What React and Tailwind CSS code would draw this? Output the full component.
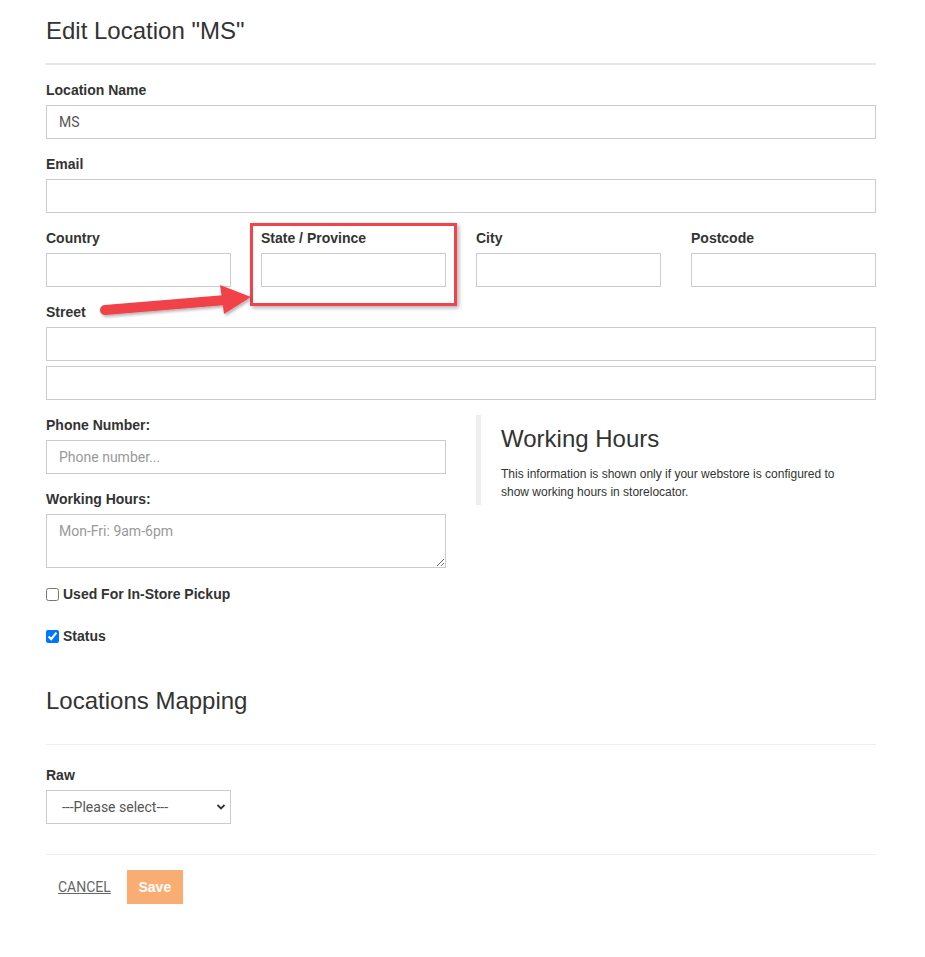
import React from "react";

const labelCls = "block h-[18px] leading-[16px] text-[14px] font-bold text-[#333] mb-[5px]";
const inputCls =
  "block w-full h-[34px] border border-[#cccccc] bg-white px-[12px] text-[14px] text-[#555] placeholder:text-[#999] outline-none [font-family:Roboto,Liberation_Sans,sans-serif]";

function Field({ label, value = "", placeholder = "", className = "" }) {
  return (
    <div className={"mb-[17px] " + className}>
      <label className={labelCls}>{label}</label>
      <input className={inputCls} defaultValue={value} placeholder={placeholder} />
    </div>
  );
}

export default function App() {
  return (
    <div className="relative w-full min-h-[957px] bg-white [font-family:Liberation_Sans,Arial,sans-serif] text-[#333]">
      <div className="ml-[46px] w-[830px] pt-[17px]">
        <h1 className="text-[24px] leading-[27px] font-normal text-[#333]">Edit Location "MS"</h1>
        <div className="mt-[19px] h-[2px] bg-[#e5e5e5]" />
        <div className="mt-[17px]">
          <Field label="Location Name" value="MS" />
          <Field label="Email" />
          <div className="grid grid-cols-4 gap-x-[30px]">
            <Field label="Country" />
            <Field label="State / Province" />
            <Field label="City" />
            <Field label="Postcode" />
          </div>
          <div className="mb-[17px]">
            <label className={labelCls}>Street</label>
            <input className={inputCls} />
            <input className={inputCls + " mt-[5px]"} />
          </div>
          <div className="grid grid-cols-2 gap-x-[30px]">
            <div>
              <Field label="Phone Number:" placeholder="Phone number..." />
              <div>
                <label className={labelCls}>Working Hours:</label>
                <textarea
                  className="block w-full h-[54px] border border-[#cccccc] bg-white px-[12px] pt-[6px] text-[14px] leading-[20px] text-[#555] placeholder:text-[#999] outline-none [font-family:Roboto,Liberation_Sans,sans-serif]"
                  placeholder="Mon-Fri: 9am-6pm"
                />
              </div>
              <label className="mt-[17px] flex h-[18px] items-center gap-[4px] text-[14px] font-bold text-[#333]">
                <input type="checkbox" className="m-0 h-[13px] w-[13px]" />
                Used For In-Store Pickup
              </label>
              <label className="mt-[24px] flex h-[18px] items-center gap-[4px] text-[14px] font-bold text-[#333]">
                <input type="checkbox" defaultChecked className="m-0 h-[13px] w-[13px] accent-[#0075ff]" />
                Status
              </label>
            </div>
            <div className="self-start -mt-[2px] h-[90px] border-l-[5px] border-[#eeeeee] pl-[20px] pt-[10px]">
              <h2 className="text-[24px] leading-[27px] font-normal text-[#333]">Working Hours</h2>
              <p className="mt-[13px] w-[345px] text-[12px] leading-[18px] text-[#333]">
                This information is shown only if your webstore is configured to show working hours in storelocator.
              </p>
            </div>
          </div>
        </div>
        <h2 className="mt-[42px] text-[24px] leading-[27px] font-normal text-[#333]">Locations Mapping</h2>
        <div className="mt-[30px] h-px bg-[#eeeeee]" />
        <div className="mt-[22px]">
          <label className={labelCls}>Raw</label>
          <div className="relative w-[185px]">
            <select className="block w-full h-[34px] appearance-none border border-[#cccccc] bg-white pl-[15px] text-[14px] text-[#555] outline-none [font-family:Roboto,Liberation_Sans,sans-serif]">
              <option>---Please select---</option>
            </select>
            <svg className="pointer-events-none absolute right-[5px] top-[12px]" width="10" height="10" viewBox="0 0 10 10">
              <path d="M1.5 3 L5 6.5 L8.5 3" fill="none" stroke="#333" strokeWidth="1.8" />
            </svg>
          </div>
        </div>
        <div className="mt-[30px] h-px bg-[#eeeeee]" />
        <div className="mt-[15px] flex items-center gap-[16px] pl-[12px]">
          <button className="text-[14px] text-[#666] underline [font-family:Roboto,Liberation_Sans,sans-serif]">CANCEL</button>
          <button className="h-[34px] w-[56px] bg-[#f9ad72] text-[14px] font-bold text-white">Save</button>
        </div>
      </div>

      <div className="pointer-events-none absolute left-[250px] top-[223px] h-[83px] w-[207px] border-[3px] border-[#f1434a] shadow-[2px_2px_4px_rgba(0,0,0,0.3)]" />
      <svg className="pointer-events-none absolute left-0 top-0" width="925" height="957">
        <defs>
          <filter id="sh" x="-10%" y="-50%" width="130%" height="200%">
            <feDropShadow dx="1.5" dy="2" stdDeviation="1.5" floodColor="#000" floodOpacity="0.3" />
          </filter>
        </defs>
        <g filter="url(#sh)" fill="#f1434a">
          <line x1="105" y1="310" x2="226" y2="300" stroke="#f1434a" strokeWidth="10" strokeLinecap="round" />
          <polygon points="220,285 251,297 224,314" />
        </g>
      </svg>
    </div>
  );
}
